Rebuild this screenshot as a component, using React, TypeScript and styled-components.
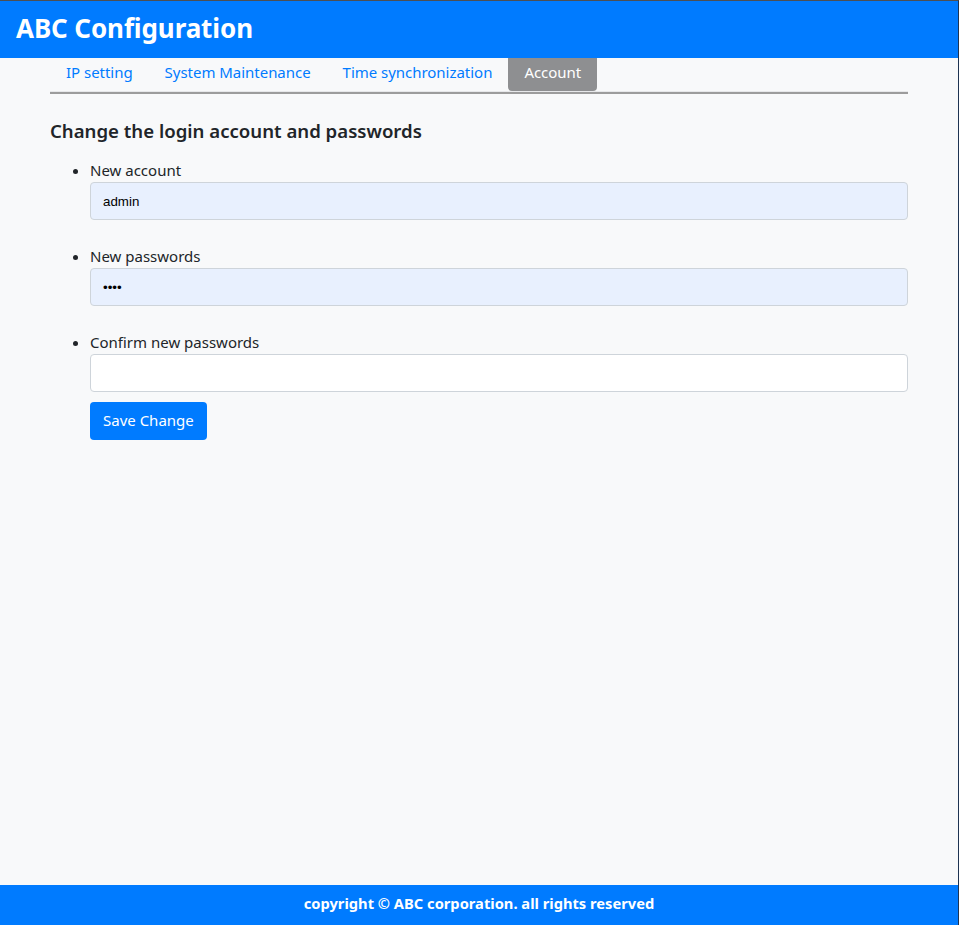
import * as React from "react";
import styled, { createGlobalStyle } from "styled-components";

const appFont = `"Noto Sans", "Open Sans", sans-serif`;

const Colors = {
  Primary: "#007bff",
  Page: "#f8f9fa",
  Text: "#212529",
  Border: "#ced4da",
  Autofill: "#e8f0fe",
  ActiveTab: "#8e8f91",
};

const GlobalStyle = createGlobalStyle`
  html, body {
    margin: 0;
    padding: 0;
    height: 100%;
  }
  body {
    font-family: ${appFont};
    color: ${Colors.Text};
    background: ${Colors.Page};
  }
  * {
    box-sizing: border-box;
  }
`;

const Frame = styled.div`
  min-height: 100vh;
  display: flex;
  flex-direction: column;
  border-top: 1px solid #4d4f52;
  border-right: 1px solid #1d3352;
  background: ${Colors.Page};
`;

const Header = styled.header`
  height: 57px;
  display: flex;
  align-items: center;
  padding: 0 16px 4px;
  background: ${Colors.Primary};
  color: #fff;

  h1 {
    margin: 0;
    font-size: 26px;
    font-weight: 700;
    letter-spacing: -0.1px;
  }
`;

const Main = styled.main`
  flex: 1;
  padding: 0 50px;
`;

const TabBar = styled.nav`
  display: flex;
  height: 36px;
  border-bottom: 2px solid #9c9c9c;
  box-shadow: inset 0 -1px 0 #e7e8ea;
`;

const Tab = styled.a<{ active?: boolean }>`
  height: 33px;
  display: flex;
  align-items: center;
  padding: 0 16px 5px;
  font-size: 15px;
  letter-spacing: -0.03px;
  color: ${({ active }) => (active ? "#fff" : Colors.Primary)};
  background: ${({ active }) => (active ? Colors.ActiveTab : "transparent")};
  border-radius: 0 0 4px 4px;
  text-decoration: none;
  cursor: pointer;
`;

const Title = styled.h2`
  margin: 25px 0 15px;
  font-size: 18.6px;
  font-weight: 600;
  line-height: 24px;
`;

const FieldList = styled.ul`
  margin: 0;
  padding-left: 40px;
  list-style: disc;
`;

const FieldItem = styled.li`
  margin-bottom: 24px;
  font-size: 15px;

  label {
    display: block;
    line-height: 24px;
  }

  &:last-child {
    margin-bottom: 0;
  }
`;

const TextInput = styled.input<{ filled?: boolean }>`
  display: block;
  width: 100%;
  height: 38px;
  padding: 0 12px;
  border: 1px solid ${Colors.Border};
  border-radius: 4px;
  background: ${({ filled }) => (filled ? Colors.Autofill : "#fff")};
  font-family: "Liberation Sans", Arial, sans-serif;
  font-size: 13.33px;
  color: #000;
  outline: none;
`;

const SaveButton = styled.button`
  margin-top: 10px;
  height: 38px;
  padding: 0 13px 2px;
  border: none;
  border-radius: 4px;
  background: ${Colors.Primary};
  color: #fff;
  font-family: ${appFont};
  font-size: 15px;
  cursor: pointer;
`;

const Footer = styled.footer`
  height: 40px;
  display: flex;
  align-items: center;
  justify-content: center;
  padding-bottom: 4px;
  background: ${Colors.Primary};
  color: #fff;
  font-size: 14.7px;
  font-weight: 700;
`;

const tabs = ["IP setting", "System Maintenance", "Time synchronization", "Account"];

const App: React.FC = () => {
  const [active, setActive] = React.useState("Account");
  const [account, setAccount] = React.useState("admin");
  const [password, setPassword] = React.useState("1234");
  const [confirm, setConfirm] = React.useState("");

  return (
    <>
      <GlobalStyle />
      <Frame>
        <Header>
          <h1>ABC Configuration</h1>
        </Header>
        <Main>
          <TabBar>
            {tabs.map(t => (
              <Tab key={t} active={t === active} onClick={() => setActive(t)}>
                {t}
              </Tab>
            ))}
          </TabBar>
          <Title>Change the login account and passwords</Title>
          <FieldList>
            <FieldItem>
              <label htmlFor="account">New account</label>
              <TextInput
                id="account"
                filled
                value={account}
                onChange={e => setAccount(e.target.value)}
              />
            </FieldItem>
            <FieldItem>
              <label htmlFor="password">New passwords</label>
              <TextInput
                id="password"
                type="password"
                filled
                value={password}
                onChange={e => setPassword(e.target.value)}
              />
            </FieldItem>
            <FieldItem>
              <label htmlFor="confirm">Confirm new passwords</label>
              <TextInput
                id="confirm"
                type="password"
                value={confirm}
                onChange={e => setConfirm(e.target.value)}
              />
              <SaveButton>Save Change</SaveButton>
            </FieldItem>
          </FieldList>
        </Main>
        <Footer>copyright © ABC corporation. all rights reserved</Footer>
      </Frame>
    </>
  );
};

export default App;
